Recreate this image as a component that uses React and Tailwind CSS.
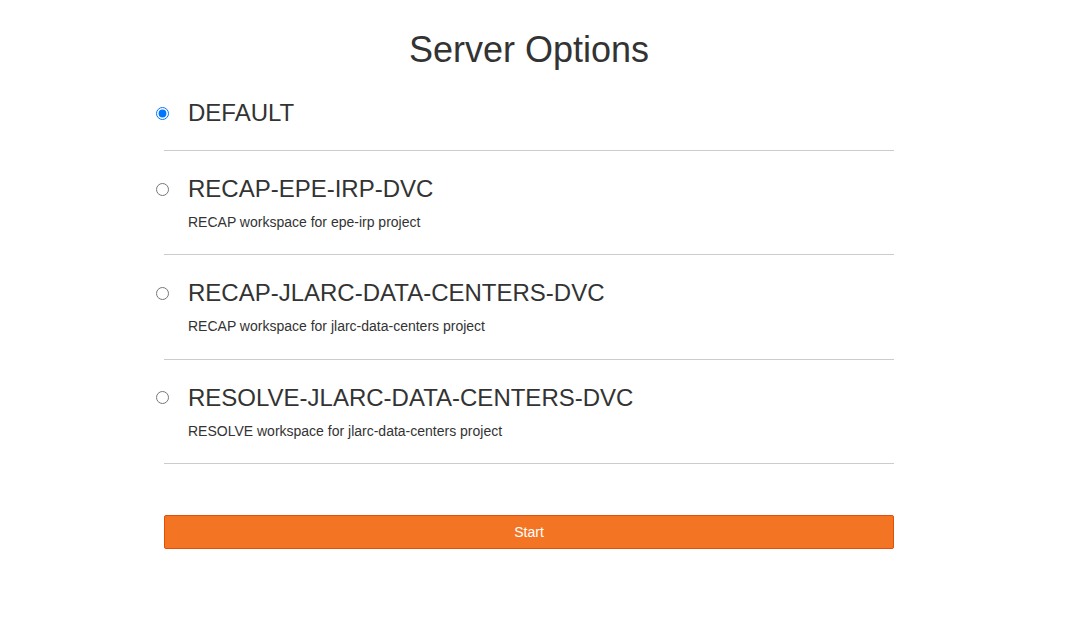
import React, { useState } from 'react';

const options = [
  { id: 'default', name: 'DEFAULT', desc: null },
  { id: 'epe', name: 'RECAP-EPE-IRP-DVC', desc: 'RECAP workspace for epe-irp project' },
  { id: 'recap-jlarc', name: 'RECAP-JLARC-DATA-CENTERS-DVC', desc: 'RECAP workspace for jlarc-data-centers project' },
  { id: 'resolve-jlarc', name: 'RESOLVE-JLARC-DATA-CENTERS-DVC', desc: 'RESOLVE workspace for jlarc-data-centers project' },
];

function App() {
  const [selected, setSelected] = useState('default');

  return (
    <div className="w-full min-h-screen bg-white text-[#333] font-['Liberation_Sans',Arial,sans-serif]">
      <div className="ml-[164px] w-[730px]">
        <h1 className="pt-[30px] mb-[5px] text-center text-[36px] leading-[40px] font-normal">
          Server Options
        </h1>

        <div className="flex flex-col">
          {options.map((opt, i) => (
            <label
              key={opt.id}
              className={`flex pt-[25px] border-b border-[#ccc] cursor-pointer ${i === 0 ? 'pb-[24px]' : 'pb-[22.4px]'}`}
            >
              <div className="w-[32px] -ml-[8px] h-[26px] flex items-center shrink-0">
                <input
                  type="radio"
                  name="profile"
                  value={opt.id}
                  checked={selected === opt.id}
                  onChange={() => setSelected(opt.id)}
                  className="w-[13px] h-[13px] m-0"
                />
              </div>
              <div className="flex flex-col">
                <h3 className="text-[24px] leading-[26px] font-normal">{opt.name}</h3>
                {opt.desc && (
                  <p className="mt-[10px] text-[14px] leading-5">{opt.desc}</p>
                )}
              </div>
            </label>
          ))}
        </div>

        <button className="mt-[51px] w-full h-[34px] bg-[#f37524] border border-[#e34e0b] rounded-[2px] text-white text-[14px] leading-5">
          Start
        </button>
      </div>
    </div>
  );
}

export default App;
